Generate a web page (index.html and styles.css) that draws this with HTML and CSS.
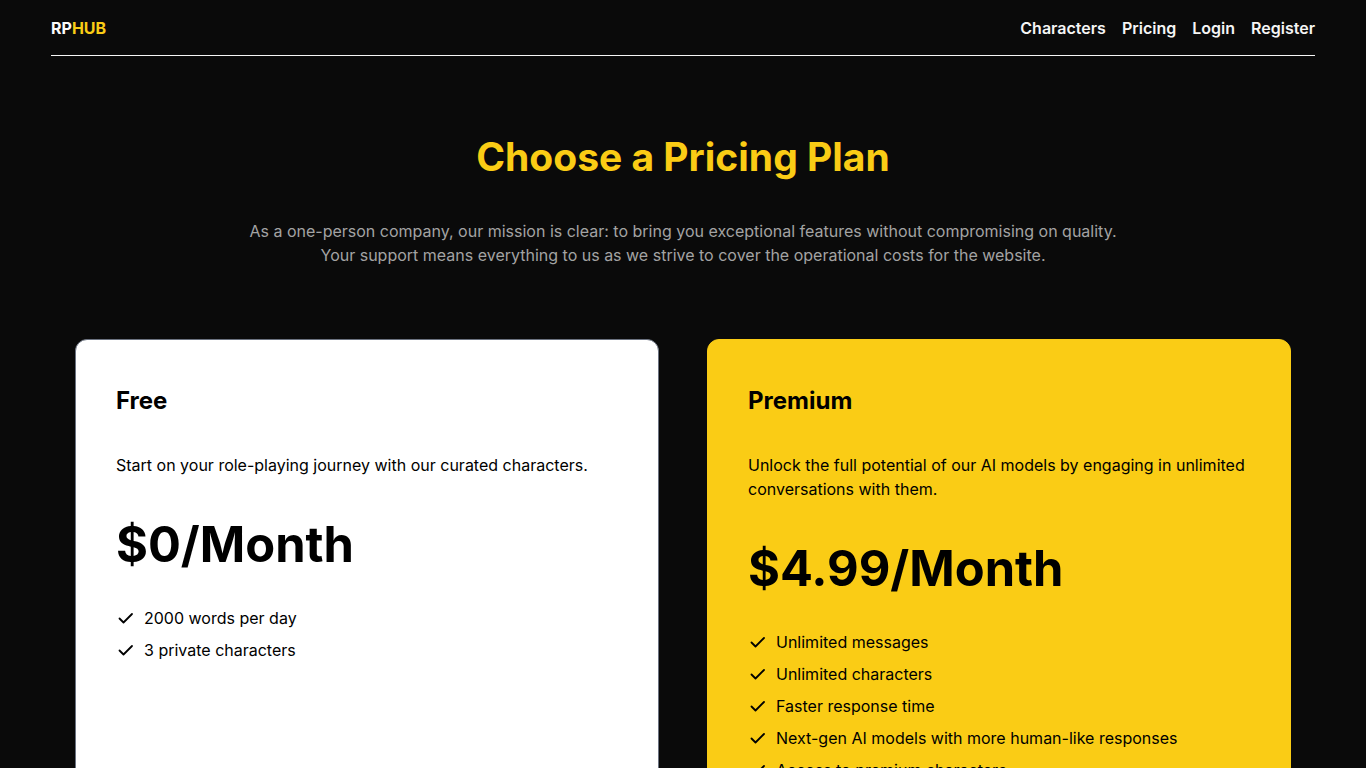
FILE: index.html
```html
<!DOCTYPE html>
<html lang="en">
<head>
    <meta charset="UTF-8">
    <meta name="viewport" content="width=device-width, initial-scale=1.0">
    <title>Pricing - RPHUB</title>
    <link rel="stylesheet" href="styles.css">
</head>
<body>

<header class="topbar">
    <a class="logo" href="#">RP<span>HUB</span></a>
    <nav class="nav">
        <a href="#">Characters</a>
        <a href="#">Pricing</a>
        <a href="#">Login</a>
        <a href="#">Register</a>
    </nav>
</header>

<main class="pricing">
    <h1>Choose a Pricing Plan</h1>
    <p class="intro">
        As a one-person company, our mission is clear: to bring you exceptional features without compromising on quality.<br>
        Your support means everything to us as we strive to cover the operational costs for the website.
    </p>

    <div class="plans">
        <div class="plan plan-free">
            <h2>Free</h2>
            <p class="plan-desc">Start on your role-playing journey with our curated characters.</p>
            <div class="price">$0/Month</div>
            <ul class="features">
                <li><svg viewBox="0 0 20 20"><polyline points="3.5 10.5 7.5 14.5 16 6"/></svg>2000 words per day</li>
                <li><svg viewBox="0 0 20 20"><polyline points="3.5 10.5 7.5 14.5 16 6"/></svg>3 private characters</li>
            </ul>
        </div>

        <div class="plan plan-premium">
            <h2>Premium</h2>
            <p class="plan-desc">Unlock the full potential of our AI models by engaging in unlimited conversations with them.</p>
            <div class="price">$4.99/Month</div>
            <ul class="features">
                <li><svg viewBox="0 0 20 20"><polyline points="3.5 10.5 7.5 14.5 16 6"/></svg>Unlimited messages</li>
                <li><svg viewBox="0 0 20 20"><polyline points="3.5 10.5 7.5 14.5 16 6"/></svg>Unlimited characters</li>
                <li><svg viewBox="0 0 20 20"><polyline points="3.5 10.5 7.5 14.5 16 6"/></svg>Faster response time</li>
                <li><svg viewBox="0 0 20 20"><polyline points="3.5 10.5 7.5 14.5 16 6"/></svg>Next-gen AI models with more human-like responses</li>
                <li><svg viewBox="0 0 20 20"><polyline points="3.5 10.5 7.5 14.5 16 6"/></svg>Access to premium characters</li>
            </ul>
        </div>
    </div>
</main>

</body>
</html>
```

FILE: styles.css
```css
body {
    margin: 0;
    background: #0a0a0a;
    color: #fff;
    font-family: Inter, 'Noto Sans', sans-serif;
    font-size: 16px;
    line-height: 24px;
}

a {
    color: inherit;
    text-decoration: none;
}

.topbar {
    display: flex;
    justify-content: space-between;
    align-items: center;
    height: 55px;
    margin: 0 51px;
    border-bottom: 1px solid #f5f5f5;
}

.logo {
    font-weight: 700;
    color: #fafafa;
}

.logo span {
    color: #facc15;
}

.nav {
    display: flex;
    gap: 16px;
}

.nav a {
    font-weight: 600;
    color: #f5f5f5;
}

.pricing {
    text-align: center;
    padding-top: 77px;
}

h1 {
    margin: 0;
    font-size: 39px;
    line-height: 48px;
    font-weight: 700;
    color: #facc15;
}

.intro {
    margin: 38px 0 0;
    color: #a3a3a3;
}

/* Cartas de planes */
.plans {
    display: grid;
    grid-template-columns: 1fr 1fr;
    gap: 48px;
    max-width: 1216px;
    margin: 72px auto 0;
    text-align: left;
}

.plan {
    border-radius: 12px;
    padding: 45px 40px 120px;
    color: #000;
}

.plan-free {
    background: #fff;
    border: 1px solid #6b7280;
}

.plan-premium {
    background: #facc15;
    border: 1px solid #facc15;
}

.plan h2 {
    margin: 0;
    font-size: 24px;
    line-height: 32px;
    font-weight: 700;
}

.plan-desc {
    margin: 36px 0 0;
}

.price {
    margin-top: 44px;
    font-size: 48.8px;
    line-height: 48px;
    font-weight: 700;
}

.features {
    list-style: none;
    margin: 37px 0 0;
    padding: 0;
    display: flex;
    flex-direction: column;
    gap: 8px;
}

.features li {
    display: flex;
    align-items: center;
    gap: 8px;
}

.features svg {
    width: 20px;
    height: 20px;
    fill: none;
    stroke: currentColor;
    stroke-width: 1.8;
    stroke-linecap: round;
    stroke-linejoin: round;
}
```
